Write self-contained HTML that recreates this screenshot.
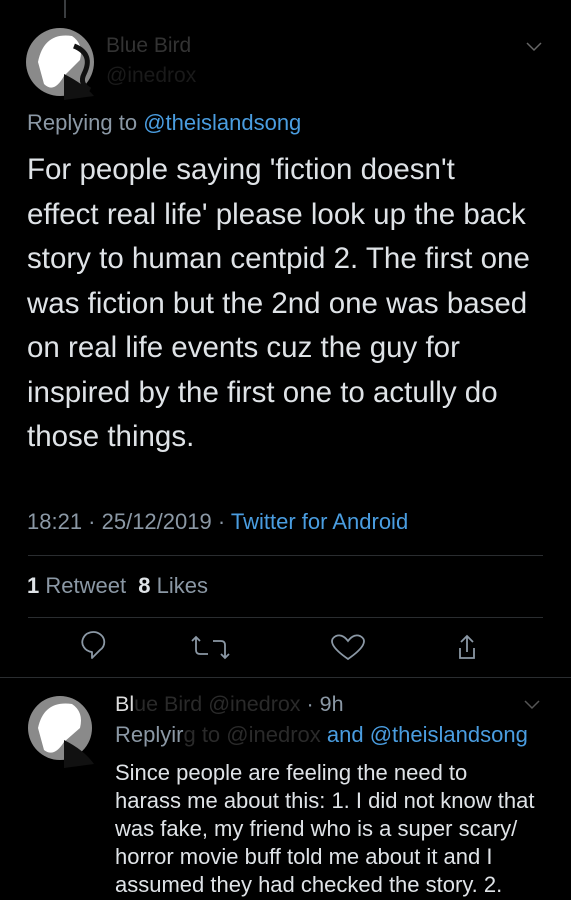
<html><head><style>
body{margin:0;width:571px;height:900px;background:#000;overflow:hidden;font-family:"Liberation Sans",sans-serif;position:relative}
.a{position:absolute;white-space:nowrap}
.g{color:#8b98a5}.b{color:#4a9de0}.w{color:#dfe3e7}
.hr{position:absolute;left:28px;right:28px;height:1px;background:#2a2d30}
</style></head><body>
<div class="a" style="left:64px;top:0;width:2px;height:18px;background:#3a3d40"></div>
<svg class="a" style="left:24px;top:24px" width="70" height="76"><circle cx="36" cy="38" r="34" fill="#8a8a8a"/><path d="M14 38 Q20 8 48 12 Q60 20 56 36 L40 52 Q30 70 20 60Z" fill="#fff"/><path d="M40 50 Q60 60 70 72 L40 76Z" fill="#111"/><path d="M50 22 Q70 30 60 50 Q55 60 66 66" stroke="#111" stroke-width="5" fill="none"/></svg>
<div class="a" style="left:106px;top:34px;font-size:21px;color:#333">Blue Bird</div>
<div class="a" style="left:106px;top:64px;font-size:21px;color:#1a1a1a">@inedrox</div>
<svg class="a" style="left:526px;top:42px" width="16" height="10"><path d="M1 1 L8 8 L15 1" stroke="#666" stroke-width="1.5" fill="none"/></svg>
<div class="a g" style="left:27px;top:110px;font-size:22px">Replying to <span class="b">@theislandsong</span></div>
<div class="a w" style="left:27px;top:148px;font-size:29.5px;line-height:44.5px">For people saying 'fiction doesn't<br>effect real life' please look up the back<br>story to human centpid 2. The first one<br>was fiction but the 2nd one was based<br>on real life events cuz the guy for<br>inspired by the first one to actully do<br>those things.</div>
<div class="a g" style="left:27px;top:509px;font-size:22px">18:21 · 25/12/2019 · <span class="b">Twitter for Android</span></div>
<div class="hr" style="top:555px"></div>
<div class="a g" style="left:27px;top:573px;font-size:22px"><b class="w" style="font-weight:600">1</b> Retweet &nbsp;<b class="w" style="font-weight:600">8</b> Likes</div>
<div class="hr" style="top:617px"></div>
<svg class="a" style="left:0;top:628px" width="571" height="40" fill="none" stroke="#8b98a5" stroke-width="1.8">
<path d="M92 30 L92 24 A11 10 0 1 1 100 22 Z" stroke-linejoin="round"/>
<path d="M192 13 L196 9 L200 13 M196 9 V22 Q196 26 200 26 H208 M229 26 L225 30 L221 26 M225 30 V17 Q225 13 221 13 H213"/>
<path d="M348 31 C332 20 328 12 336 8 C341 6 345 9 348 13 C351 9 355 6 360 8 C368 12 364 20 348 31Z"/>
<path d="M467 8 V24 M461 14 L467 8 L473 14 M460 20 V30 H474 V20"/>
</svg>
<div class="hr" style="top:677px;left:0;right:0"></div>
<svg class="a" style="left:24px;top:692px" width="70" height="76"><circle cx="36" cy="36" r="32" fill="#8a8a8a"/><path d="M14 36 Q20 8 48 12 Q60 20 56 36 L40 50 Q30 66 20 58Z" fill="#fff"/><path d="M40 48 Q60 58 70 72 L40 76Z" fill="#111"/></svg>
<div class="a" style="left:115px;top:692px;font-size:21.5px;color:#2a2a2a"><span style="color:#ddd">Bl</span>ue Bird @inedrox <span class="g">· 9h</span></div>
<svg class="a" style="left:524px;top:700px" width="16" height="10"><path d="M1 1 L8 8 L15 1" stroke="#555" stroke-width="1.5" fill="none"/></svg>
<div class="a" style="left:115px;top:722px;font-size:22px;color:#2a2a2a"><span class="g">Replyir</span>g to @inedrox <span class="b">and @theislandsong</span></div>
<div class="a w" style="left:115px;top:759px;font-size:22px;line-height:28px">Since people are feeling the need to<br>harass me about this: 1. I did not know that<br>was fake, my friend who is a super scary/<br>horror movie buff told me about it and I<br>assumed they had checked the story. 2.</div>
</body></html>
